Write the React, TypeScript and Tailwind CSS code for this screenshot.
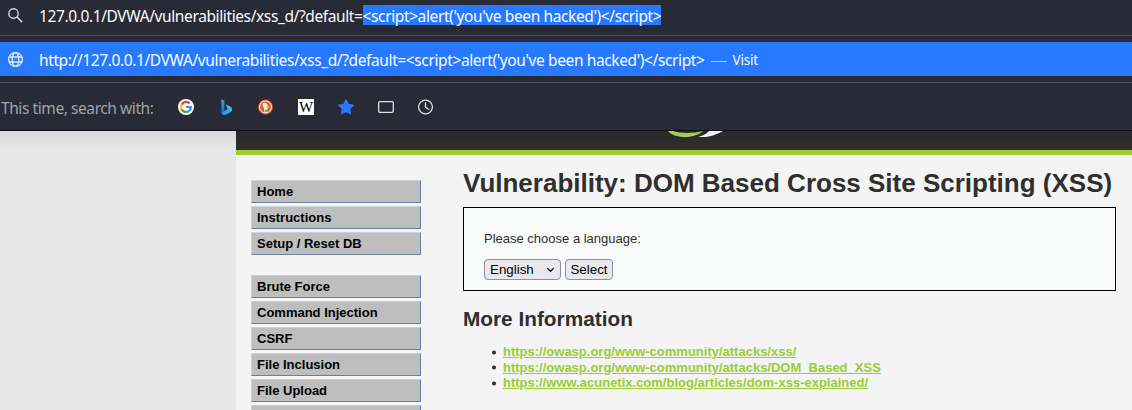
import type { ReactNode } from "react";

const payload = "<script>alert('you've been hacked')</script>";
const path = "127.0.0.1/DVWA/vulnerabilities/xss_d/?default=";

const menuGroups = [
  ["Home", "Instructions", "Setup / Reset DB"],
  ["Brute Force", "Command Injection", "CSRF", "File Inclusion", "File Upload", ""],
];

const links = [
  "https://owasp.org/www-community/attacks/xss/",
  "https://owasp.org/www-community/attacks/DOM_Based_XSS",
  "https://www.acunetix.com/blog/articles/dom-xss-explained/",
];

function Icon({ children }: { children: ReactNode }) {
  return (
    <svg className="block size-4 shrink-0 overflow-visible" viewBox="0 0 16 16" fill="none">
      {children}
    </svg>
  );
}

function SearchIcon() {
  return (
    <Icon>
      <circle cx="5.5" cy="5.5" r="4.7" stroke="#d7d7dc" strokeWidth="1.4" />
      <path d="m9 9 4.6 4.6" stroke="#d7d7dc" strokeWidth="1.5" strokeLinecap="round" />
    </Icon>
  );
}

function GlobeIcon() {
  return (
    <Icon>
      <g stroke="#dce9ff" strokeWidth="1.35">
        <circle cx="7.5" cy="8.5" r="6.9" />
        <ellipse cx="7.5" cy="8.5" rx="3.3" ry="6.9" />
        <path d="M1 6h13M1 11h13" />
      </g>
    </Icon>
  );
}

function GoogleIcon() {
  return (
    <Icon>
      <circle cx="8" cy="8" r="8" fill="#fff" />
      <g strokeWidth="2.2">
        <path d="M11.7 4.4A5 5 0 0 0 3.6 5.7" stroke="#ea4335" />
        <path d="M3.6 5.7a5 5 0 0 0 0 4.7" stroke="#fbbc05" />
        <path d="M3.6 10.4a5 5 0 0 0 7.6 1.4" stroke="#34a853" />
        <path d="M11.2 11.8A4.8 4.8 0 0 0 12.9 8H8.1" stroke="#4285f4" />
      </g>
    </Icon>
  );
}

function BingIcon() {
  return (
    <Icon>
      <defs>
        <linearGradient id="bing-stem" x1="0" y1="0" x2="0" y2="1">
          <stop stopColor="#37a8ef" />
          <stop offset="1" stopColor="#1553d8" />
        </linearGradient>
        <linearGradient id="bing-bowl" x1="0" y1="1" x2="1" y2="0">
          <stop stopColor="#1787ec" />
          <stop offset="1" stopColor="#45d8ee" />
        </linearGradient>
      </defs>
      <path d="M3.3.2 6.4 1.7v10.7L4.6 15.4 3.3 13.6Z" fill="url(#bing-stem)" />
      <path d="M3.5 13.4 9.7 10.2 7.7 5.2l4.5 2.2c2.4 1.2 2.3 4.4.4 5.6l-4.7 2.7C6 16.5 3.7 15.5 3.5 13.4Z" fill="url(#bing-bowl)" />
    </Icon>
  );
}

function DuckIcon() {
  return (
    <Icon>
      <circle cx="7.5" cy="8" r="7.5" fill="#de5833" />
      <circle cx="7.5" cy="8" r="5.9" stroke="#fff" strokeWidth="1" />
      <path d="M4.7 4.7C6 2.8 9.5 3.6 9.6 6.2l.2 2.3-.6 4.7-2.6.2-1-5.2C4.9 7 4.2 6 4.7 4.7Z" fill="#f5eee5" />
      <path d="M8 7.7c1.7-.5 3-.4 3.5 0-.8 1-2 1.3-3.5 1.2Z" fill="#ffc928" />
      <path d="m6.9 10.8 3.8-.4v2.2l-3.7.4Z" fill="#5eb34b" />
    </Icon>
  );
}

function WikipediaIcon() {
  return (
    <span className="flex size-4 shrink-0 items-center justify-center overflow-hidden bg-white font-['Liberation_Serif',serif] text-[15px] leading-4 tracking-normal text-black">
      W
    </span>
  );
}

function StarIcon() {
  return (
    <Icon>
      <path d="m8 .9 2.2 4.6 5 .7-3.6 3.5.8 5L8 12.4l-4.4 2.3.8-5L.8 6.2l5-.7Z" fill="#2779ff" stroke="#2779ff" strokeWidth="1.3" strokeLinejoin="round" />
    </Icon>
  );
}

function TabIcon() {
  return (
    <Icon>
      <rect x=".7" y="2.6" width="14.6" height="10.8" rx="1.3" stroke="#e1e1e4" strokeWidth="1.3" />
    </Icon>
  );
}

function ClockIcon() {
  return (
    <Icon>
      <circle cx="7.5" cy="8" r="6.9" stroke="#e1e1e4" strokeWidth="1.3" />
      <path d="M7.5 3.8v4.4l3 2" stroke="#e1e1e4" strokeWidth="1.3" strokeLinecap="round" />
    </Icon>
  );
}

function AddressPanel() {
  return (
    <section className="h-[131px] shrink-0 overflow-hidden border-b border-[#0e0f12] bg-[#282a35] font-['Noto_Sans',sans-serif] text-[15.5px] tracking-[-0.385px] whitespace-nowrap text-[#fbfbfe]">
      <div className="flex h-9 border-b border-[#494b55] pl-2">
        <div className="mt-2">
          <SearchIcon />
        </div>
        <div className="mt-[5px] ml-[15px] flex h-5 leading-[22px]">
          <span>{path}</span>
          <span className="h-5 bg-[#2779ff]">{payload}</span>
        </div>
      </div>
      <div className="mt-1.5 flex h-[34px] items-center bg-[#2779ff] pl-2">
        <GlobeIcon />
        <span className="ml-[15px] pt-0.5 leading-5">{"http://" + path + payload}</span>
        <span className="ml-1.5 h-px w-4 translate-y-[2px] bg-[#a9c9ff]" />
        <span className="ml-1.5 pt-0.5 text-[13.5px] leading-5 tracking-[-0.2px]">Visit</span>
      </div>
      <div className="mt-1.5 flex h-12 items-center border-t border-[#494b55] pl-px">
        <span className="w-[177px] pt-0.5 leading-5 tracking-[-0.42px] text-[#a1a1a6]">This time, search with:</span>
        <div className="flex gap-6">
          <GoogleIcon />
          <BingIcon />
          <DuckIcon />
          <WikipediaIcon />
          <StarIcon />
          <TabIcon />
          <ClockIcon />
        </div>
      </div>
    </section>
  );
}

export default function App() {
  return (
    <div className="flex h-[410px] w-[1132px] flex-col overflow-hidden bg-[#e6e6e6] font-['Liberation_Sans',Arial,sans-serif] text-[13px] text-[#2f2f2f]">
      <AddressPanel />
      <div className="flex min-h-0 flex-1">
        <div className="w-[236px] shrink-0 bg-linear-to-b from-[#d8d8d8] to-[#e6e6e6] to-[16px]" />
        <div className="flex min-w-0 flex-1 flex-col bg-[#f4f4f4]">
          <header className="h-6 shrink-0 border-b-5 border-[#a2cc33] bg-linear-to-b from-[#292929] to-[#2f2f2f]">
            <svg className="ml-[428px] block h-[8px] w-[62px]" viewBox="0 0 62 8">
              <path d="M4 0C9 7.5 30 8.5 39 0C30 2.5 16 2.5 9 0Z" fill="#abc957" />
              <path d="M45 0H59C52 4 42 7.5 34 5.4C40 5 43 2.2 45 0Z" fill="#f2f2f2" />
            </svg>
          </header>
          <div className="flex min-h-0 flex-1 overflow-hidden">
            <nav className="mt-[25px] ml-[15px] flex w-[170px] shrink-0 flex-col gap-5">
              {menuGroups.map((items) => (
                <ul key={items[0]} className="flex flex-col gap-[3px]">
                  {items.map((item) => (
                    <li
                      key={item}
                      className="h-[23px] border border-t-[#d0d0d0] border-r-[#6d7f9c] border-b-[#6d7f9c] border-l-[#d0d0d0] bg-[#bebebe] pl-[5px] leading-[22px] font-bold text-black"
                    >
                      {item}
                    </li>
                  ))}
                </ul>
              ))}
            </nav>
            <main className="ml-[42px] w-[653px] shrink-0">
              <h1 className="mt-[13px] h-[39px] text-[26px] leading-[30px] font-bold whitespace-nowrap">
                Vulnerability: DOM Based Cross Site Scripting (XSS)
              </h1>
              <div className="h-[84px] border border-black bg-[#f8faf9] pl-5">
                <p className="mt-[23px] leading-4">Please choose a language:</p>
                <div className="mt-3 flex gap-1 text-[13.33px] text-black">
                  <button className="flex h-[21px] w-[77px] items-center rounded-[4px] border border-[#8f8f9d] bg-[#e9e9ed] pl-[5px]">
                    English
                    <svg className="ml-3 h-[6px] w-[9px]" viewBox="0 0 9 6" fill="none">
                      <path d="m1.2 1.1 3.3 3.2 3.3-3.2" stroke="#111" strokeWidth="1.3" />
                    </svg>
                  </button>
                  <button className="flex h-[21px] w-12 items-center justify-center rounded-[4px] border border-[#8f8f9d] bg-[#e9e9ed]">
                    Select
                  </button>
                </div>
              </div>
              <h2 className="mt-4 text-[20.8px] leading-6 font-bold">More Information</h2>
              <ul className="mt-[13px] ml-[29px] leading-[15.6px]">
                {links.map((link) => (
                  <li key={link} className="flex items-center">
                    <span className="mr-[7px] size-1 translate-y-[0.5px] rounded-full bg-[#2f2f2f]" />
                    <a className="font-bold text-[#9acd32] underline" href="#">
                      {link}
                    </a>
                  </li>
                ))}
              </ul>
            </main>
          </div>
        </div>
      </div>
    </div>
  );
}
